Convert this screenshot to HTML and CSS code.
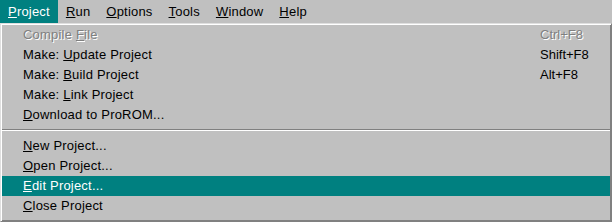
FILE: index.html
```html
<!doctype html>
<html>
<head>
  <meta charset="utf-8">
  <title>Project Menu</title>
  <link rel="stylesheet" href="styles.css">
</head>
<body>
  <div class="menubar">
    <span class="menu active"><u>P</u>roject</span>
    <span class="menu"><u>R</u>un</span>
    <span class="menu"><u>O</u>ptions</span>
    <span class="menu"><u>T</u>ools</span>
    <span class="menu"><u>W</u>indow</span>
    <span class="menu"><u>H</u>elp</span>
  </div>

  <ul class="dropdown">
    <li class="item disabled"><span>Compile <u>F</u>ile</span><span class="key">Ctrl+F8</span></li>
    <li class="item"><span>Make: <u>U</u>pdate Project</span><span class="key">Shift+F8</span></li>
    <li class="item"><span>Make: <u>B</u>uild Project</span><span class="key">Alt+F8</span></li>
    <li class="item"><span>Make: <u>L</u>ink Project</span></li>
    <li class="item"><span><u>D</u>ownload to ProROM...</span></li>
    <li class="separator"></li>
    <li class="item"><span><u>N</u>ew Project...</span></li>
    <li class="item"><span><u>O</u>pen Project...</span></li>
    <li class="item selected"><span><u>E</u>dit Project...</span></li>
    <li class="item"><span><u>C</u>lose Project</span></li>
  </ul>
</body>
</html>
```

FILE: styles.css
```css
html, body {
  margin: 0;
  padding: 0;
  background-color: #c0c0c0;
}
body {
  width: 612px;
  height: 222px;
  overflow: hidden;
  color: #000;
  font-family: "Liberation Sans", Arial, sans-serif;
  font-size: 13px;
  letter-spacing: 0.2px;
}
u {
  text-decoration: underline;
  text-underline-offset: 1px;
}

.menubar {
  display: flex;
  height: 23px;
  line-height: 23px;
}
.menubar .menu {
  padding: 0 8px;
  white-space: nowrap;
}
.menubar .menu.active {
  background-color: #008080;
  color: #fff;
}

.dropdown {
  height: 193px;
  margin: 0;
  padding: 1px 1px 3px;
  list-style: none;
  border: 1px solid;
  border-color: #dfdfdf #808080 #808080 #dfdfdf;
  box-shadow: inset 1px 1px 0 #fff, inset -1px -1px 0 #808080;
}
.item {
  display: grid;
  grid-template-columns: 517px auto;
  padding-left: 21px;
  height: 20px;
  line-height: 20px;
  white-space: nowrap;
}
.item .key {
  letter-spacing: 0;
}
.item.disabled {
  color: #808080;
  text-shadow: 1px 1px 0 #fff;
}
.item.selected {
  background-color: #008080;
  color: #fff;
}
.separator {
  height: 0;
  margin: 4px 0 5px;
  border-top: 1px solid #808080;
  border-bottom: 1px solid #fff;
}
```
